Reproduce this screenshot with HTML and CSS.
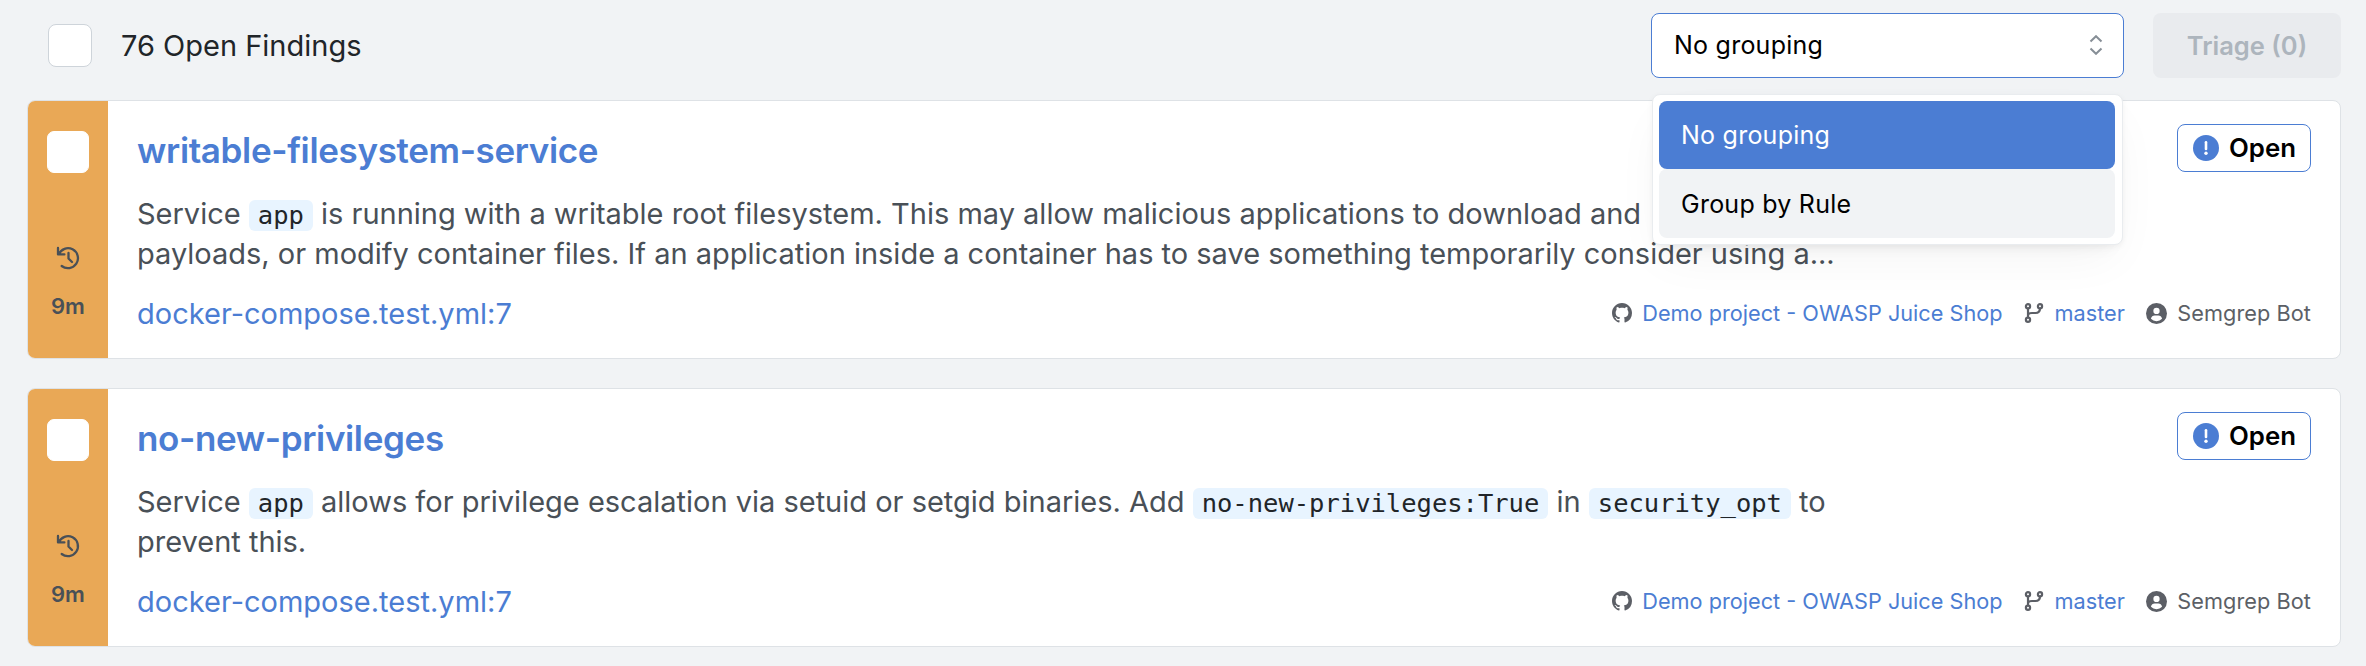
FILE: index.html
```
<!DOCTYPE html>
<html lang="en">
<head>
<meta charset="utf-8">
<title>Open Findings</title>
<link rel="stylesheet" href="styles.css">
</head>
<body>
<svg class="sprite" aria-hidden="true">
  <symbol id="history" viewBox="0 0 24 24"><path d="M2 2v6.400h6.400M2.700 8.400a10 10 0 1 1 3 11.600M12.500 7v5.500l3.500 3.500" fill="none" stroke="currentColor" stroke-width="2.300" stroke-linecap="round" stroke-linejoin="round"/></symbol>
  <symbol id="github" viewBox="0 0 16 16"><path fill="currentColor" d="M8 0C3.58 0 0 3.58 0 8c0 3.54 2.29 6.53 5.470 7.590.4.070.550-.170.550-.380 0-.190-.010-.820-.010-1.490-2.010.370-2.530-.490-2.690-.940-.090-.230-.480-.940-.820-1.130-.280-.150-.680-.520-.010-.530.630-.010 1.080.580 1.230.820.720 1.210 1.870.870 2.330.660.070-.520.280-.870.510-1.070-1.780-.200-3.640-.890-3.640-3.950 0-.870.310-1.590.820-2.150-.080-.200-.360-1.020.080-2.120 0 0 .670-.210 2.200.820.640-.180 1.320-.270 2-.270s1.360.090 2 .270c1.530-1.040 2.200-.820 2.200-.820.440 1.100.160 1.920.080 2.120.510.560.820 1.270.820 2.150 0 3.070-1.870 3.750-3.650 3.950.290.250.540.730.540 1.480 0 1.070-.010 1.930-.010 2.200 0 .210.150.460.550.380A8.010 8.010 0 0 0 16 8c0-4.420-3.580-8-8-8z"/></symbol>
  <symbol id="branch" viewBox="0 0 18 20"><g fill="none" stroke="currentColor" stroke-width="2.200"><circle cx="3" cy="3.200" r="2.100"/><circle cx="15" cy="3.200" r="2.100"/><circle cx="3" cy="16.800" r="2.100"/><path d="M3 5.300v9.400M15 5.300c0 3.500-1.500 4.700-4.500 4.700H7c-2.500 0-4 .8-4 2.500"/></g></symbol>
  <symbol id="user" viewBox="0 0 20 20"><circle cx="10" cy="10" r="10" fill="currentColor"/><circle cx="10" cy="7.500" r="3" fill="#fff"/><path d="M4.700 15c.5-2 1.800-3 3.500-3h3.600c1.700 0 3 1 3.500 3a7.300 7.300 0 0 1-10.600 0z" fill="#fff"/></symbol>
  <symbol id="alert" viewBox="0 0 26 26"><circle cx="13" cy="13" r="13" fill="currentColor"/><path d="M13 7.300v6.700" stroke="#fff" stroke-width="2.600" stroke-linecap="round"/><circle cx="13" cy="18.200" r="1.700" fill="#fff"/></symbol>
  <symbol id="selector" viewBox="0 0 14 20"><path d="M1.500 6.500L7 1.200l5.500 5.300M1.500 13.500L7 18.800l5.500-5.300" fill="none" stroke="currentColor" stroke-width="2"/></symbol>
</svg>
<header class="toolbar">
  <span class="checkbox"></span>
  <h1 class="count">76 Open Findings</h1>
  <div class="select">
    <span>No grouping</span>
    <svg class="selector"><use href="#selector"/></svg>
    <div class="menu">
      <div class="option selected">No grouping</div>
      <div class="option hover">Group by Rule</div>
    </div>
  </div>
  <button class="triage">Triage (0)</button>
</header>
<main class="findings">
  <article class="card">
    <aside class="severity"><span class="checkbox"></span><svg class="history"><use href="#history"/></svg><span class="age">9m</span></aside>
    <div class="body">
      <div class="head"><h2 class="title">writable-filesystem-service</h2><span class="badge"><svg class="alert"><use href="#alert"/></svg>Open</span></div>
      <p class="description">Service <code>app</code> is running with a writable root filesystem. This may allow malicious applications to download and<br>payloads, or modify container files. If an application inside a container has to save something temporarily consider using a...</p>
      <div class="foot"><a class="file">docker-compose.test.yml:7</a>
        <div class="meta">
          <span class="item"><svg class="github"><use href="#github"/></svg><a>Demo project - OWASP Juice Shop</a></span>
          <span class="item"><svg class="branch"><use href="#branch"/></svg><a>master</a></span>
          <span class="item"><svg class="user"><use href="#user"/></svg>Semgrep Bot</span>
        </div>
      </div>
    </div>
  </article>
  <article class="card">
    <aside class="severity"><span class="checkbox"></span><svg class="history"><use href="#history"/></svg><span class="age">9m</span></aside>
    <div class="body">
      <div class="head"><h2 class="title">no-new-privileges</h2><span class="badge"><svg class="alert"><use href="#alert"/></svg>Open</span></div>
      <p class="description">Service <code>app</code> allows for privilege escalation via setuid or setgid binaries. Add <code>no-new-privileges:True</code> in <code>security_opt</code> to<br>prevent this.</p>
      <div class="foot"><a class="file">docker-compose.test.yml:7</a>
        <div class="meta">
          <span class="item"><svg class="github"><use href="#github"/></svg><a>Demo project - OWASP Juice Shop</a></span>
          <span class="item"><svg class="branch"><use href="#branch"/></svg><a>master</a></span>
          <span class="item"><svg class="user"><use href="#user"/></svg>Semgrep Bot</span>
        </div>
      </div>
    </div>
  </article>
</main>
</body>
</html>
```
FILE: styles.css
```
* { box-sizing: border-box; }
body { margin: 0; height: 666px; overflow: hidden; background: #f1f3f5; color: #212529; font-family: Inter, "Liberation Sans", sans-serif; }
h1, h2, p { margin: 0; font-weight: 400; }
a { color: #4b7dd3; }
.sprite { display: none; }
.toolbar { display: flex; align-items: center; height: 65px; margin: 13px 25px 22px 48px; }
.checkbox { flex: none; width: 44px; height: 43px; background: #fff; border: 1px solid #ced4da; border-radius: 8px; }
.count { margin-left: 29px; font-size: 29px; }
.select { position: relative; display: flex; align-items: center; justify-content: space-between; width: 473px; height: 65px; margin-left: auto; padding: 0 20px 1px 22px; background: #fff; border: 1px solid #4b7dd3; border-radius: 8px; color: #000; font-size: 25px; letter-spacing: .24px; }
.selector { width: 14px; height: 20px; color: #868e96; }
.menu { position: absolute; z-index: 2; left: 0; top: 80px; width: 471px; height: 151px; padding: 6px 7px 6px 6px; background: #fff; border: 1px solid #e9ecef; border-radius: 8px; box-shadow: 0 2px 6px rgba(0,0,0,.05), 0 20px 50px -10px rgba(0,0,0,.05), 0 14px 14px -10px rgba(0,0,0,.04); }
.option { display: flex; align-items: center; height: 68px; padding-left: 22px; border-radius: 8px; }
.selected { background: #4b7dd3; color: #fff; }
.hover { height: 69px; background: #f1f3f5; }
.triage { width: 188px; height: 65px; margin-left: 29px; padding: 0 0 1px; border: 0; border-radius: 8px; background: #e9ebee; color: #adb5bd; font: 600 25.5px Inter, sans-serif; }
.findings { display: flex; flex-direction: column; gap: 29px; padding: 0 25px 0 27px; }
.card { display: flex; height: 259px; background: #fff; border: 1px solid #dee2e6; border-radius: 8px; overflow: hidden; }
.severity { flex: none; display: flex; flex-direction: column; align-items: center; width: 80px; padding-top: 30px; background: #e9a856; color: #495057; }
.severity .checkbox { width: 42px; height: 42px; border-color: #fff; border-radius: 7px; }
.history { width: 24px; height: 24px; margin-top: 73px; }
.age { margin-top: 22px; font-size: 22px; font-weight: 600; line-height: 28px; }
.body { flex: 1; display: flex; flex-direction: column; padding: 23px 29px 0; }
.head { display: flex; justify-content: space-between; height: 70px; }
.title { color: #4b7dd3; font-size: 35px; font-weight: 600; line-height: 53px; letter-spacing: -.36px; }
.badge { display: flex; align-items: center; gap: 10px; width: 134px; height: 48px; padding: 0 0 1px 15px; border: 1px solid #4b7dd3; border-radius: 8px; color: #000; font-size: 25.8px; font-weight: 600; }
.alert { width: 26px; height: 26px; color: #4b7dd3; }
.description { height: 80px; color: #495057; font-size: 29px; line-height: 40px; letter-spacing: -.005px; white-space: nowrap; }
code { padding: 0 9px 1px; border-radius: 6px; background: #e8f4ff; color: #212529; font: 25.5px "DejaVu Sans Mono", monospace; }
.foot { display: flex; justify-content: space-between; align-items: center; height: 78px; }
.file { font-size: 29px; }
.meta { display: flex; gap: 21.5px; color: #5c5f66; font-size: 21.7px; }
.item { display: flex; align-items: center; gap: 10.5px; }
.github, .branch { width: 20px; height: 20px; }
.user { width: 21px; height: 21px; margin-left: -.5px; }
.item:last-child { letter-spacing: .06px; }
```
